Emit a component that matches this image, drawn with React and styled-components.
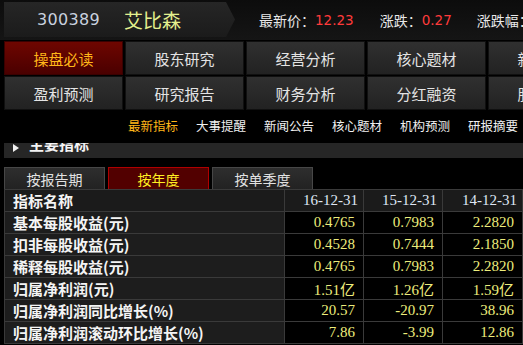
import React from "react";
import styled, { createGlobalStyle } from "styled-components";

const Global = createGlobalStyle`
  html, body { margin: 0; padding: 0; background: #000; }
  body { width: 523px; height: 345px; overflow: hidden; font-family: "Noto Sans CJK SC", "Noto Sans", sans-serif; }
`;

const Page = styled.div`
  width: 523px;
  height: 345px;
  overflow: hidden;
  background: #000;
`;

const Header = styled.div`
  height: 40px;
  display: flex;
  align-items: stretch;
  padding: 2px 0 3px 4px;
  box-sizing: border-box;
  background: linear-gradient(#0c0c0c, #151515);
`;

const CodePanel = styled.div`
  width: 231px;
  flex: none;
  display: flex;
  align-items: center;
  background: linear-gradient(#262626, #1b1b1b);
  clip-path: polygon(0 0, 222px 0, 231px 50%, 222px 100%, 0 100%);
`;

const Code = styled.span`
  margin-left: 33px;
  font-family: "DejaVu Sans", sans-serif;
  font-size: 16px;
  color: #c9d1df;
  letter-spacing: 0.3px;
`;

const Name = styled.span`
  margin-left: 24px;
  font-size: 19px;
  color: #e4f08e;
`;

const Quote = styled.div`
  display: flex;
  align-items: center;
  white-space: nowrap;
  padding-left: 24px;
  font-size: 14px;
  color: #e8e8e8;
`;

const QuoteLabel = styled.span`
  margin-right: ${(p) => p.$mr || 0}px;
`;

const QuoteValue = styled.span`
  font-family: "DejaVu Sans", sans-serif;
  font-size: 13.5px;
  color: #ff3b3b;
  margin-right: ${(p) => p.$mr}px;
`;

const NavGrid = styled.div`
  display: flex;
  flex-direction: column;
  gap: 1px;
  padding: 1px 0 0 4px;
`;

const NavRow = styled.div`
  display: flex;
  gap: 2px;
`;

const NavButton = styled.div`
  width: 119px;
  height: 34px;
  flex: none;
  box-sizing: border-box;
  display: flex;
  align-items: center;
  justify-content: center;
  font-size: 15px;
  border: 1px solid ${(p) => (p.$active ? "#3a0000" : "#101010")};
  background: ${(p) =>
    p.$active
      ? "linear-gradient(#6e0600, #4a0000)"
      : "linear-gradient(#303030, #222222)"};
  color: ${(p) => (p.$active ? "#ffb619" : "#e4e4e4")};
`;

const SubNav = styled.div`
  height: 30px;
  display: flex;
  align-items: center;
  padding-left: 128px;
  white-space: nowrap;
  font-size: 12.5px;
  color: #f0f0f0;
`;

const SubItem = styled.span`
  color: ${(p) => (p.$active ? "#ffb619" : "#f0f0f0")};
`;

const Sep = styled.span`
  display: inline-block;
  width: 2px;
  height: 9px;
  margin: 0 9px;
  background: linear-gradient(90deg, #bbb 50%, #c40000 50%);
`;

const SectionBar = styled.div`
  margin: 3px 0 0 4px;
  height: 15px;
  overflow: hidden;
  background: #262626;
  display: flex;
  align-items: flex-start;
`;

const Tri = styled.span`
  width: 0;
  height: 0;
  margin: 1px 0 0 9px;
  border-top: 4px solid transparent;
  border-bottom: 4px solid transparent;
  border-left: 6px solid #f0f0f0;
`;

const SectionTitle = styled.span`
  margin: -10px 0 0 10px;
  font-size: 15px;
  font-weight: bold;
  line-height: 22px;
  color: #f4f4f4;
`;

const Tabs = styled.div`
  display: flex;
  gap: 3px;
  margin-top: 9px;
  padding-left: 4px;
`;

const Tab = styled.div`
  width: 101px;
  height: 22px;
  box-sizing: border-box;
  display: flex;
  align-items: center;
  justify-content: center;
  font-size: 14px;
  border: 1px solid ${(p) => (p.$active ? "#b00000" : "#474747")};
  border-bottom: none;
  background: ${(p) =>
    p.$active ? "#520000" : "linear-gradient(#2e2e2e, #222)"};
  color: ${(p) => (p.$active ? "#ffee22" : "#e2e2e2")};
`;

const Table = styled.table`
  margin-left: 4px;
  border-collapse: collapse;
  table-layout: fixed;
  width: 518px;
`;

const Th = styled.th`
  height: 21px;
  padding: ${(p) => (p.$label ? "0 0 0 8px" : "0 5px 0 0")};
  border: 1px solid #3a3a3a;
  background: #1b1b1b;
  text-align: ${(p) => (p.$label ? "left" : "right")};
  font-size: 15px;
  font-weight: ${(p) => (p.$label ? "bold" : "normal")};
  font-family: ${(p) =>
    p.$label ? `"Noto Sans CJK SC", sans-serif` : `"Liberation Serif", serif`};
  color: ${(p) => (p.$label ? "#f4f4f4" : "#dfe6f4")};
  white-space: nowrap;
  overflow: hidden;
`;

const LabelCell = styled.td`
  height: 21px;
  padding: 0 0 0 8px;
  border: 1px solid #3a3a3a;
  background: #1d1d1d;
  font-size: 15px;
  font-weight: bold;
  color: #f4f4f4;
  white-space: nowrap;
  overflow: hidden;
`;

const ValueCell = styled.td`
  height: 21px;
  padding: 0 8px 0 0;
  border: 1px solid #3a3a3a;
  background: #000;
  text-align: right;
  font-family: "Liberation Serif", "Noto Sans CJK SC", serif;
  font-size: 15px;
  color: #eded7c;
  white-space: nowrap;
`;

const nav1 = ["操盘必读", "股东研究", "经营分析", "核心题材", "新闻公告"];
const nav2 = ["盈利预测", "研究报告", "财务分析", "分红融资", "股本结构"];
const sub = ["最新指标", "大事提醒", "新闻公告", "核心题材", "机构预测", "研报摘要"];
const tabs = ["按报告期", "按年度", "按单季度"];
const dates = ["16-12-31", "15-12-31", "14-12-31"];
const rows = [
  ["基本每股收益(元)", "0.4765", "0.7983", "2.2820"],
  ["扣非每股收益(元)", "0.4528", "0.7444", "2.1850"],
  ["稀释每股收益(元)", "0.4765", "0.7983", "2.2820"],
  ["归属净利润(元)", "1.51亿", "1.26亿", "1.59亿"],
  ["归属净利润同比增长(%)", "20.57", "-20.97", "38.96"],
  ["归属净利润滚动环比增长(%)", "7.86", "-3.99", "12.86"],
];

export default function App() {
  return (
    <Page>
      <Global />
      <Header>
        <CodePanel>
          <Code>300389</Code>
          <Name>艾比森</Name>
        </CodePanel>
        <Quote>
          <QuoteLabel>最新价：</QuoteLabel>
          <QuoteValue $mr={26}>12.23</QuoteValue>
          <QuoteLabel>涨跌：</QuoteLabel>
          <QuoteValue $mr={25}>0.27</QuoteValue>
          <QuoteLabel>涨跌幅：</QuoteLabel>
        </Quote>
      </Header>
      <NavGrid>
        <NavRow>
          {nav1.map((t, i) => (
            <NavButton key={t} $active={i === 0}>{t}</NavButton>
          ))}
        </NavRow>
        <NavRow>
          {nav2.map((t) => (
            <NavButton key={t}>{t}</NavButton>
          ))}
        </NavRow>
      </NavGrid>
      <SubNav>
        {sub.map((t, i) => (
          <React.Fragment key={t}>
            <SubItem $active={i === 0}>{t}</SubItem>
            <Sep />
          </React.Fragment>
        ))}
      </SubNav>
      <SectionBar>
        <Tri />
        <SectionTitle>主要指标</SectionTitle>
      </SectionBar>
      <Tabs>
        {tabs.map((t, i) => (
          <Tab key={t} $active={i === 1}>{t}</Tab>
        ))}
      </Tabs>
      <Table>
        <colgroup>
          <col style={{ width: 280 }} />
          <col style={{ width: 79 }} />
          <col style={{ width: 79 }} />
          <col style={{ width: 80 }} />
        </colgroup>
        <thead>
          <tr>
            <Th $label>指标名称</Th>
            {dates.map((d) => (
              <Th key={d}>{d}</Th>
            ))}
          </tr>
        </thead>
        <tbody>
          {rows.map((r) => (
            <tr key={r[0]}>
              <LabelCell>{r[0]}</LabelCell>
              <ValueCell>{r[1]}</ValueCell>
              <ValueCell>{r[2]}</ValueCell>
              <ValueCell>{r[3]}</ValueCell>
            </tr>
          ))}
        </tbody>
      </Table>
    </Page>
  );
}
